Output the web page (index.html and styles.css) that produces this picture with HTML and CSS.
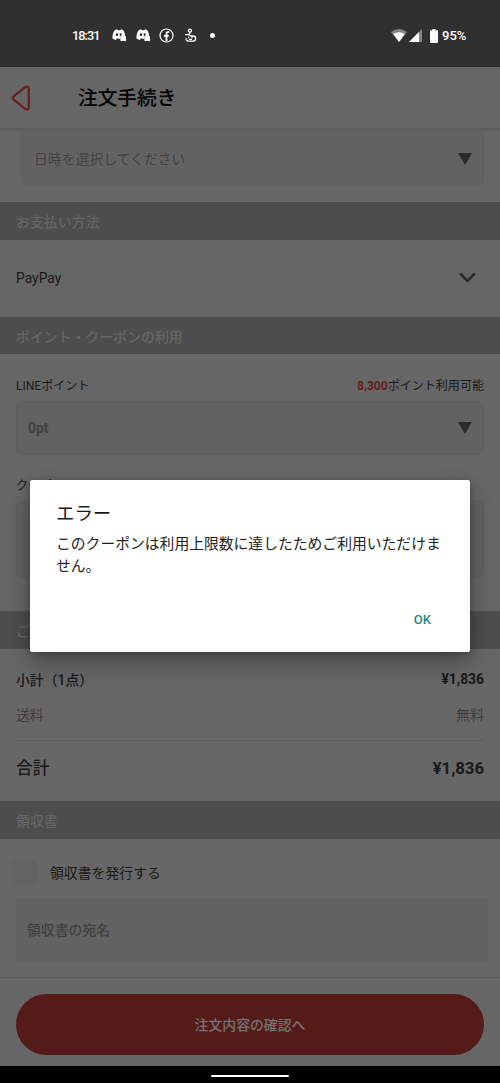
FILE: index.html
```html
<!DOCTYPE html>
<html lang="ja">
<head>
<meta charset="utf-8">
<title>注文手続き</title>
<link rel="stylesheet" href="styles.css">
</head>
<body>
<div class="screen">
  <div class="status">
    <span class="clock">18:31</span>
    <svg class="discord" width="15" height="13" viewBox="0 0 15 13"><path fill="#fff" fill-rule="evenodd" d="M3 1 5 .3 6 1.200h2L9 .3 11 1c1.400 1.800 2 3.500 2 6H8.500v3.500L7 9.500H5L3.500 11 .5 9.500C.3 6 1 3 3 1ZM5 4.300a1.200 1.400 0 1 0 0 2.800 1.200 1.400 0 0 0 0-2.800Zm4 0a1.100 1.300 0 1 0 0 2.500 1.100 1.300 0 0 0 0-2.500Z"/><path fill="#fff" d="M8.500 7h5.500v5H8.500z"/></svg>
    <svg class="discord" width="15" height="13" viewBox="0 0 15 13"><path fill="#fff" fill-rule="evenodd" d="M3 1 5 .3 6 1.200h2L9 .3 11 1c1.400 1.800 2 3.500 2 6H8.500v3.500L7 9.500H5L3.500 11 .5 9.500C.3 6 1 3 3 1ZM5 4.300a1.200 1.400 0 1 0 0 2.800 1.200 1.400 0 0 0 0-2.800Zm4 0a1.100 1.300 0 1 0 0 2.500 1.100 1.300 0 0 0 0-2.500Z"/><path fill="#fff" d="M8.500 7h5.500v5H8.500z"/></svg>
    <svg class="facebook" width="15" height="15" viewBox="0 0 15 15"><circle cx="7.500" cy="7.500" r="6.500" fill="none" stroke="#fff" stroke-width="1.200"/><path d="M7.500 13V6c0-1.600.8-2.200 2.700-2M5 7.800h4.700" fill="none" stroke="#fff" stroke-width="1.800"/></svg>
    <svg class="stroller" width="12" height="15" viewBox="0 0 12 15"><g fill="none" stroke="#fff" stroke-width="1.300"><circle cx="5" cy="2.700" r="1.500"/><path d="M5 4.200 4 6.500M0 6.600h4.500l1 1.400H8c3.500 0 3.500 5.200 0 5.200H4c-2 0-3-1-3-3M3 9.500h1m2.500 0h1M4 11.300h3"/></g></svg>
    <span class="dot"></span>
    <svg class="wifi" width="16" height="13" viewBox="0 0 16 13"><path fill="#848484" d="M0 3Q8-3 16 3L8 13Z"/><path fill="#fff" d="M2.300 5Q8 1.500 13.700 5L8 13Z"/></svg>
    <svg class="signal" width="14" height="13" viewBox="0 0 14 13"><path fill="#848484" d="M13 0v13H0Z"/><path fill="#fff" d="M10 3v10H0Z"/></svg>
    <svg class="battery" width="8" height="14" viewBox="0 0 8 14"><path fill="#fff" d="M2.500 0h3v1.300H7q1 0 1 1V13q0 1-1 1H1q-1 0-1-1V2.300q0-1 1-1h1.500Z"/></svg>
    <span class="percent">95%</span>
  </div>
  <header class="header">
    <svg class="back" width="20" height="26" viewBox="0 0 20 26"><path d="M14.300 2 2.700 11.400q-1.900 1.600 0 3.200L14.300 24q3.300 1.400 3.500-1.500v-19Q17.600.6 14.300 2Z" fill="none" stroke="#661f1d" stroke-width="2.200"/></svg>
    <h1 class="title">注文手続き</h1>
  </header>
  <main class="content">
    <div class="field date"><span class="hint">日時を選択してください</span><svg width="14" height="12" viewBox="0 0 14 12"><path fill="#2b2b2b" d="M0 0h14L7 12Z"/></svg></div>
    <h2 class="bar">お支払い方法</h2>
    <div class="payment"><span>PayPay</span><svg width="17" height="11" viewBox="0 0 17 11"><path d="m1.200 1.500 7.300 7.300 7.300-7.300" fill="none" stroke="#292929" stroke-width="2.600"/></svg></div>
    <h2 class="bar">ポイント・クーポンの利用</h2>
    <div class="points">
      <div class="label"><span>LINEポイント</span><span><b class="red">8,300</b>ポイント利用可能</span></div>
      <div class="field point"><b class="hint">0pt</b><svg width="14" height="12" viewBox="0 0 14 12"><path fill="#2b2b2b" d="M0 0h14L7 12Z"/></svg></div>
      <div class="label coupon-label"><span>クーポン</span></div>
      <div class="field coupon"></div>
    </div>
    <h2 class="bar">ご請求金額</h2>
    <div class="summary">
      <div class="row subtotal"><span>小計（1点）</span><span>¥1,836</span></div>
      <div class="row shipping"><span>送料</span><span>無料</span></div>
      <div class="row total"><span>合計</span><span>¥1,836</span></div>
    </div>
    <h2 class="bar">領収書</h2>
    <div class="receipt">
      <div class="check"><span class="box"></span><span class="check-text">領収書を発行する</span></div>
      <div class="name">領収書の宛名</div>
    </div>
  </main>
  <footer class="footer"><div class="submit">注文内容の確認へ</div></footer>
  <div class="nav"><span class="handle"></span></div>
  <section class="dialog">
    <h3 class="dialog-title">エラー</h3>
    <p class="message">このクーポンは利用上限数に達したためご利用いただけません。</p>
    <div class="ok">OK</div>
  </section>
</div>
</body>
</html>
```
FILE: styles.css
```css
* { box-sizing: border-box; }
body { margin: 0; background: #666; font-family: Roboto, "Noto Sans CJK JP", sans-serif; font-size: 13.85px; color: #1a1a1a; }
h1, h2, h3, p { margin: 0; }
svg { display: block; flex: none; }
.screen { position: relative; width: 500px; height: 1083px; overflow: hidden; display: flex; flex-direction: column; background: #666; white-space: nowrap; }
.status { height: 67px; flex: none; display: flex; align-items: center; padding: 4px 32px 0 72px; background: #303030; color: #fff; font-size: 13px; font-weight: 500; }
.clock { width: 40px; letter-spacing: -1px; font-size: 12.800px; }
.percent { width: 26px; }
.discord { margin-right: 9px; }
.facebook { margin-right: 11px; margin-left: -1px; }
.dot { width: 5px; height: 5px; margin-left: 13px; border-radius: 50%; background: #fff; }
.wifi { margin-left: auto; margin-right: 2px; }
.signal { margin-right: 7px; }
.battery { margin-right: 4px; }
.header { height: 62px; flex: none; display: flex; align-items: center; padding-left: 11px; border-bottom: 1px solid #5c5c5c; box-shadow: 0 1px 3px rgba(0,0,0,.13); }
.title { margin-left: 47px; padding-top: 2px; font-size: 19.700px; font-weight: 500; line-height: 30px; color: #000; }
.content { flex: 1; min-height: 0; padding-top: 3px; }
.field { display: flex; align-items: center; justify-content: space-between; background: #626262; border: 1px solid #5f5f5f; border-radius: 6px; padding: 0 11px; }
.hint { color: #404040; }
.date { height: 54px; margin: 0 16px 16px 21px; padding-left: 12px; }
.date .hint { color: #424242; padding-bottom: 2px; }
.bar { height: 37.500px; padding: 3px 16px 0; line-height: 35px; font-size: 13.900px; font-weight: 500; background: #4d4d4d; color: #656565; }
.payment { height: 77px; display: flex; justify-content: space-between; align-items: center; padding: 0 24px 0 16px; }
.payment svg { margin-bottom: 2px; }
.points { height: 257px; padding: 20px 16px 0; }
.label { height: 20px; display: flex; justify-content: space-between; align-items: center; font-size: 12.050px; }
.red { color: #661f1d; font-weight: 700; }
.point { height: 54px; margin-top: 7px; }
.coupon-label { margin-top: 19px; }
.coupon { height: 77px; margin-top: 7px; }
.summary { height: 152.500px; padding: 11px 16px 0; }
.row { display: flex; justify-content: space-between; align-items: center; }
.subtotal { height: 38px; font-weight: 500; }
.shipping { height: 33px; color: #3d3d3d; }
.total { height: 56px; margin-top: 9px; border-top: 1px solid #5e5e5e; font-size: 16.700px; font-weight: 500; }
.total span:first-child { padding-bottom: 2px; }
.subtotal span:last-child, .total span:last-child { font-weight: 700; }
.receipt { padding-top: 21.500px; }
.check { display: flex; align-items: center; gap: 12px; height: 27px; padding-left: 12px; }
.check-text { padding-bottom: 3px; }
.box { width: 26px; height: 27px; border-radius: 5px; background: #636363; }
.name { height: 63px; margin: 11px 12px 0 16px; padding-left: 11px; line-height: 64px; font-weight: 500; background: #626262; color: #404040; }
.footer { height: 89px; flex: none; padding: 16px 16px 0; border-top: 1px solid #5c5c5c; }
.submit { height: 61px; border-radius: 31px; background: #551b19; color: #737373; line-height: 62px; text-align: center; font-weight: 500; }
.nav { height: 17px; flex: none; padding-top: 9px; background: #000; }
.handle { display: block; width: 78px; height: 2px; margin: 0 auto; background: #fff; border-radius: 1px; }
.dialog { position: absolute; left: 30px; top: 480px; width: 440px; height: 172px; padding: 20px 26px 0; background: #fff; border-radius: 2px; box-shadow: 0 10px 24px rgba(0,0,0,.3), 0 2px 7px rgba(0,0,0,.22); }
.dialog-title { height: 27px; line-height: 27px; font-size: 18.400px; font-weight: 400; }
.message { height: 44px; margin-top: 7px; line-height: 21.500px; font-size: 14.800px; white-space: normal; color: #222; width: 390px; }
.ok { margin: 30px 13px 0 0; text-align: right; line-height: 24px; font-size: 13px; font-weight: 500; color: #26877a; }
```
